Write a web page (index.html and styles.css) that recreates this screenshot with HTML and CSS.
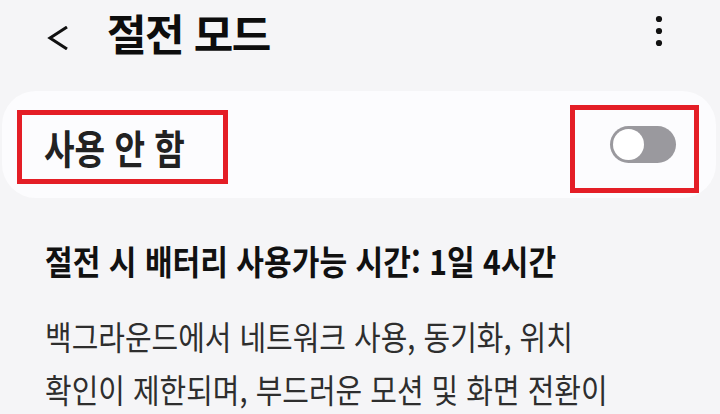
FILE: index.html
```html
<!DOCTYPE html>
<html lang="ko">
<head>
<meta charset="utf-8">
<title>절전 모드</title>
<link rel="stylesheet" href="styles.css">
</head>
<body>
<header class="appbar">
  <button class="back" aria-label="뒤로">
    <svg width="24" height="24" viewBox="0 0 24 24"><path d="M21 1 L4 12 L21 23" fill="none" stroke="#111" stroke-width="3" stroke-linejoin="miter"/></svg>
  </button>
  <h1 class="title">절전 모드</h1>
  <button class="more" aria-label="더보기">
    <svg width="12" height="36" viewBox="0 0 12 36"><circle cx="6" cy="6" r="3.1" fill="#111"/><circle cx="6" cy="18" r="3.1" fill="#111"/><circle cx="6" cy="30" r="3.1" fill="#111"/></svg>
  </button>
</header>
<section class="card">
  <div class="label-box"><span class="label">사용 안 함</span></div>
  <div class="toggle-box"><span class="switch"><span class="thumb"></span></span></div>
</section>
<section class="info">
  <h2 class="estimate"><span class="squeeze">절전 시 배터리 사용가능 시간: 1일 4시간</span></h2>
  <p class="desc">
    <span class="line">백그라운드에서 네트워크 사용, 동기화, 위치</span>
    <span class="line">확인이 제한되며, 부드러운 모션 및 화면 전환이</span>
  </p>
</section>
</body>
</html>
```
FILE: styles.css
```css
html, body {
  margin: 0;
  padding: 0;
  overflow: hidden;
}
body {
  background: #f5f5f7;
  font-family: "Noto Sans CJK KR", "Noto Sans", sans-serif;
  color: #111;
  width: 720px;
  height: 414px;
}
.appbar {
  display: flex;
  align-items: flex-start;
  height: 91px;
  padding-left: 46px;
  box-sizing: border-box;
}
.back, .more {
  border: 0;
  background: none;
  padding: 0;
  display: block;
}
.back svg, .more svg { display: block; }
.back { margin-top: 26px; width: 24px; height: 24px; }
.title {
  margin: 4px 0 0 37px;
  font-size: 43px;
  line-height: 56px;
  letter-spacing: -1.5px;
  font-weight: 700;
  color: #0d0d0d;
  white-space: nowrap;
  flex: 1;
}
.more { margin: 13px 55px 0 0; width: 12px; height: 36px; }

.card {
  display: flex;
  justify-content: space-between;
  align-items: flex-start;
  height: 107px;
  margin: 0 4px 0 2px;
  padding: 0 17px 0 15px;
  border-radius: 34px;
  background: #fcfcfe;
}
.label-box {
  box-sizing: border-box;
  width: 211px;
  height: 74px;
  margin-top: 19px;
  border: 5px solid #e41e26;
  display: flex;
  align-items: center;
  padding-left: 22px;
}
.label {
  display: inline-block;
  font-size: 40px;
  line-height: 56px;
  font-weight: 700;
  color: #222;
  white-space: nowrap;
  transform: scaleX(0.83);
  transform-origin: left center;
}
.toggle-box {
  box-sizing: border-box;
  width: 129px;
  height: 88px;
  margin-top: 14px;
  border: 5px solid #e41e26;
  padding: 16px 18px 0 35px;
}
.switch {
  display: block;
  width: 66px;
  height: 37px;
  border-radius: 19px;
  background: #9a999e;
  position: relative;
}
.thumb {
  position: absolute;
  left: 3px;
  top: 3px;
  width: 31px;
  height: 31px;
  border-radius: 50%;
  background: #fff;
}

.info {
  padding-left: 45px;
}
.estimate {
  margin: 40px 0 0;
  font-size: 34px;
  line-height: 46px;
  font-weight: 700;
  color: #111;
}
.squeeze, .line {
  display: block;
  white-space: nowrap;
  transform-origin: left center;
}
.estimate .squeeze { transform: scaleX(0.885); }
.desc {
  margin: 26px 0 0;
  font-size: 33px;
  line-height: 53px;
  font-weight: 400;
  color: #2e2e2e;
}
.line { transform: scaleX(0.877); }
```
